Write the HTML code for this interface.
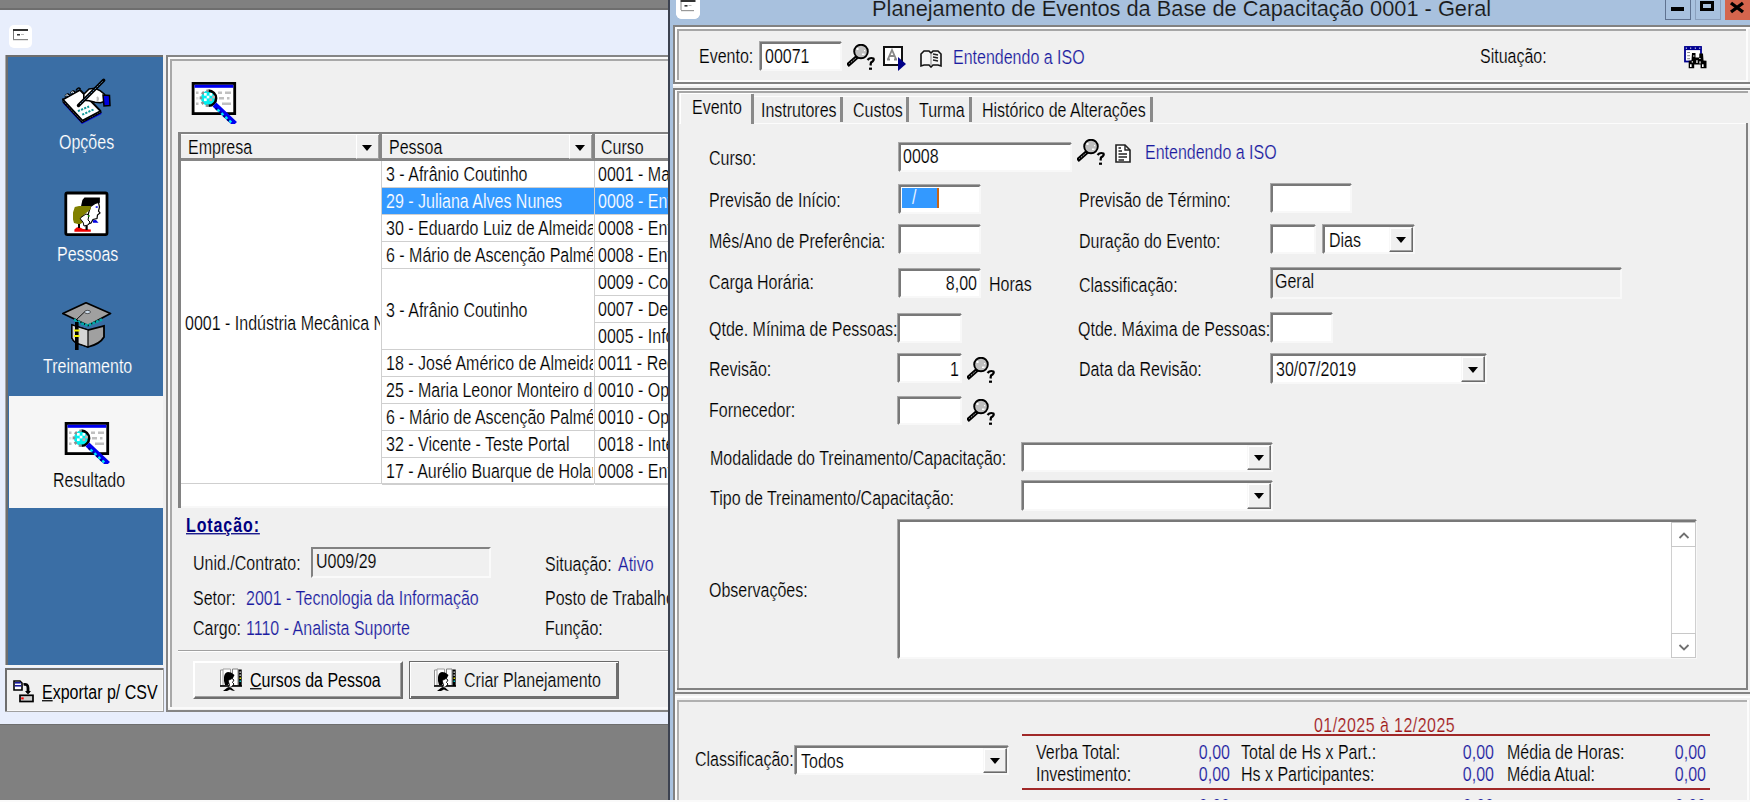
<!DOCTYPE html>
<html><head><meta charset="utf-8">
<style>
*{margin:0;padding:0;box-sizing:border-box}
html,body{width:1750px;height:802px;overflow:hidden;background:#808080;font-family:"Liberation Sans",sans-serif;font-size:16px;color:#000}
.a{position:absolute}
.t{position:absolute;white-space:nowrap;line-height:18px;font-size:16px;transform:scaleY(1.25);transform-origin:0 14.5px;-webkit-text-stroke:0.15px var(--bg,#f0f0f0)}
.wb{--bg:#fff}
.ttl{transform:none}
.w{color:#fff}
.bl{color:#1c1ca0}
.sunk{position:absolute;background:#fff;border-style:solid;border-width:2px;border-color:#787878 #f8f8f8 #f8f8f8 #787878;box-shadow:-1px -1px 0 #a8a8a8}
.btn{position:absolute;background:#f0f0f0;border:1px solid #f8f8f8;border-right-color:#6a6a6a;border-bottom-color:#6a6a6a;box-shadow:inset -1px -1px 0 #a0a0a0, inset 1px 1px 0 #fff}
.hl{position:absolute;background:#808080}
.vl{position:absolute;background:#808080}
</style></head><body>

<!-- LEFT WINDOW -->
<div class="a" style="left:0;top:0;width:669px;height:8px;background:#808080"></div>
<div class="a" style="left:0;top:8px;width:669px;height:2px;background:#6e6e6e"></div>
<div class="a" style="left:0;top:10px;width:669px;height:714px;background:#e8eefc"></div>
<div class="a" style="left:0;top:724px;width:669px;height:1px;background:#6e6e6e"></div>
<div class="a" id="winicon" style="left:9px;top:25px;width:23px;height:23px;background:#fff;border-radius:5px"><svg width="23" height="23" viewBox="0 0 23 23"><rect x="0.5" y="0.5" width="22" height="22" rx="5" fill="#fff"/><rect x="4" y="4" width="15" height="2" fill="#333"/><rect x="4" y="6" width="1" height="9" fill="#777"/><rect x="4" y="14" width="15" height="1.2" fill="#888"/><rect x="8" y="9" width="3" height="1.5" fill="#333"/><rect x="12" y="9" width="3" height="1" fill="#bbb"/></svg></div>

<!-- nav panel -->
<div class="a" style="left:5px;top:55px;width:159px;height:612px;background:#a8a8a8"></div>
<div class="a" style="left:6px;top:55px;width:157px;height:611px;background:#6e6e6e"></div>
<div class="a" style="left:8px;top:57px;width:155px;height:608px;background:#3a6ea5"></div>
<div class="a" style="left:9px;top:396px;width:154px;height:112px;background:#f6f6f6"></div>
<div class="a" style="left:163px;top:55px;width:3px;height:612px;background:#f0f0f0"></div>
<div class="a" style="left:5px;top:665px;width:158px;height:2px;background:#f4f4f4"></div>
<div class="t w" style="--bg:#3a6ea5;left:59px;top:135px">Opções</div>
<div class="t w" style="--bg:#3a6ea5;left:57px;top:247px">Pessoas</div>
<div class="t w" style="--bg:#3a6ea5;left:43px;top:359px">Treinamento</div>
<div class="t" style="--bg:#f6f6f6;left:53px;top:473px">Resultado</div>

<div class="a" id="icoOpc" style="left:61px;top:77px;width:50px;height:48px"><svg width="50" height="48" viewBox="0 0 50 48"><path d="M2.5 27 L21 47 L40.5 37 L40 34 L21 44 L2 23 Z" fill="#0000e0"/><path d="M2 22.5 L2 25 L21 45.5 L40 35.5 L39.5 34 L21.5 43.5 Z" fill="#fff" stroke="#000" stroke-width="1.2"/><path d="M2 22.5 L21.5 43.5 L39.5 34 L19 13 Z" fill="#fff" stroke="#000" stroke-width="1.8" stroke-linejoin="round"/><path d="M3 25.5 L21 45 L39.5 35.5" fill="none" stroke="#000" stroke-width="1.4" stroke-dasharray="1.4 1.4"/><path d="M16.9 34.1 L28.1 29.5 M21.2 37.7 L32.8 32.4" stroke="#109898" stroke-width="2" stroke-dasharray="2.2 1.2"/><path d="M4 19.5 Q6 15.5 8.5 18 M9.5 16.5 Q11.5 12.5 14 15 M15 13.5 Q17 9.5 19.5 12" fill="none" stroke="#000" stroke-width="1.5"/><path d="M4.5 18.5 Q6 17 7.5 18.5 M10 15.5 Q11.5 14 13 15.5" fill="none" stroke="#fff" stroke-width="1"/><path d="M22.8 17.2 L28.1 11.9 L34.1 11.2 L39.4 13.9 L43.4 17.2 L44.7 21.2 L43.4 24.5 L39.4 25.8 L34.1 25.2 L28.1 23.8 L22.8 23.2 Z" fill="#fff" stroke="#000" stroke-width="1.6"/><path d="M36 20 Q38 22 36 24" fill="none" stroke="#c0c0c0" stroke-width="2"/><path d="M42 18 L48.5 18.5 L49 28.5 L43 29 Z" fill="#0000e0" stroke="#000" stroke-width="1.5"/><path d="M17.5 28.5 L42.7 3.3" stroke="#000" stroke-width="3.4" stroke-linecap="round"/><path d="M19 27 L42 4" stroke="#6090c0" stroke-width="0.9" stroke-dasharray="2 1"/></svg></div>
<div class="a" id="icoPes" style="left:64px;top:191px;width:45px;height:45px"><svg width="45" height="45" viewBox="0 0 45 45"><rect x="1.8" y="2" width="41.2" height="41.6" rx="1.5" fill="#fff" stroke="#000" stroke-width="2.8"/><path d="M17 15.3 L18.4 9 L20.5 6.5 L35.9 6.5 L35.9 11.8 L33.1 12.5 L28.2 15.3 Z" fill="#000"/><path d="M26.5 15.5 L31 12.5 L34.5 11.5 L35.5 16 L34.5 20 L36 22 L33.5 24 L33 27.5 L29 28.5 L27 32 L24 33 L21 30 L24 24 Z" fill="#fff" stroke="#000" stroke-width="1.2"/><path d="M9 21.5 L10.8 16 L15 14.9 L26.8 14.9 L26.8 18 L17 26.4 L16.3 27.8 L19.1 31.3 L15.6 33.4 L10 32 L9 28.5 Z" fill="#808000"/><path d="M17 26.4 L22 23 L25 24 L24 29 L26 31 L24 34 L20 35 L19.1 31.3 L16.3 27.8 Z" fill="#fff" stroke="#000" stroke-width="1"/><rect x="23.8" y="24.3" width="1.6" height="1.5" fill="#00a000"/><rect x="31.7" y="15.3" width="2" height="1.5" fill="#0000e0"/><path d="M28.9 29.2 L32 29 L34.5 31.7 L29 31.7 Z" fill="#0000e0"/><path d="M10.4 38.5 L13 36.2 L16 36.5 L19 38 L26.8 38.5 L26.8 40.7 L10.4 40.7 Z" fill="#f00000"/><rect x="14" y="33" width="2" height="4" fill="#000"/><rect x="21.5" y="34.5" width="2.2" height="4.5" fill="#000"/></svg></div>
<div class="a" id="icoTre" style="left:62px;top:302px;width:50px;height:48px"><svg width="50" height="48" viewBox="0 0 50 48"><path d="M10 23 L10 36 Q12 41 19 42.5 L26 45 Q38 42 42 35 L42 24 L26 28 Z" fill="#a0a0a0" stroke="#000" stroke-width="1.8"/><path d="M10 23 L26 28 L26 45 L19 42.5 Q12 41 10 36 Z" fill="#d4d4d4" stroke="#000" stroke-width="1.2"/><path d="M0.8 11.5 L24 0.8 L48.5 11.5 L26 23.5 Z" fill="#a0a0a0" stroke="#000" stroke-width="1.8" stroke-linejoin="round"/><path d="M12 17.5 L16 19.5 L20 21.5 L26 23.5 L33 20.5 L40 17.5" fill="none" stroke="#00a8a8" stroke-width="2.6" stroke-dasharray="3 1"/><path d="M14 18 L23 9.5" fill="none" stroke="#000" stroke-width="0.9"/><ellipse cx="25.5" cy="10" rx="3" ry="1.6" fill="#d0e0f0" stroke="#333" stroke-width="0.8"/><rect x="13" y="20" width="3.6" height="28" fill="#000"/><rect x="12" y="27.5" width="5.6" height="2" fill="#f0f000"/><rect x="12" y="33" width="5.6" height="2" fill="#f0f000"/></svg></div>
<div class="a" id="icoResult2" style="left:64px;top:422px;width:46px;height:42px"><svg width="46" height="42" viewBox="0 0 46 42"><rect x="2.1" y="1.4" width="41.6" height="30.2" fill="#fff" stroke="#000" stroke-width="2.8"/><rect x="3.5" y="2.8" width="38.8" height="3" fill="#0000f0"/><rect x="27" y="9.5" width="4" height="2.5" fill="#c0c0c0"/><rect x="34" y="9.5" width="6" height="2.5" fill="#c0c0c0"/><rect x="28" y="15" width="5" height="2.5" fill="#c0c0c0"/><rect x="36" y="15" width="2.5" height="2.5" fill="#c0c0c0"/><rect x="31" y="20.5" width="9" height="2.5" fill="#c0c0c0"/><rect x="5" y="9.5" width="2.5" height="2.5" fill="#c0c0c0"/><rect x="5" y="20.5" width="2.5" height="2.5" fill="#c0c0c0"/><rect x="5" y="15" width="2.5" height="2.5" fill="#e0e0e0"/><circle cx="17.5" cy="16.2" r="7.6" fill="#00f0f0"/><path d="M17.5 8.6 A7.6 7.6 0 0 1 17.5 23.8" fill="none" stroke="#000" stroke-width="2.6"/><path d="M17.5 23.8 A7.6 7.6 0 0 1 17.5 8.6" fill="none" stroke="#909090" stroke-width="2.6" stroke-dasharray="2.7 2.7"/><rect x="13" y="11" width="2.7" height="2.7" fill="#fff"/><rect x="18.5" y="11" width="2.7" height="2.7" fill="#fff"/><rect x="15.7" y="13.7" width="2.7" height="2.7" fill="#fff"/><rect x="13" y="16.4" width="2.7" height="2.7" fill="#fff"/><rect x="21.2" y="13.7" width="2.7" height="2.7" fill="#c8b0b0"/><rect x="18.5" y="16.4" width="2.7" height="2.7" fill="#c8b0b0"/><path d="M25.5 24.5 L42 40" stroke="#0000f0" stroke-width="5.6" stroke-linecap="square"/><path d="M24.5 26 L40 41" stroke="#000080" stroke-width="1.8" stroke-dasharray="2.7 2.7"/><path d="M26.5 27.5 L41 41" stroke="#00f0f0" stroke-width="2.2" stroke-dasharray="2.7 2.7"/></svg></div>
<!-- export button -->
<div class="a" style="left:5px;top:668px;width:159px;height:44px;background:#f8f8f8;border-top:2px solid #6e6e6e;border-left:2px solid #6e6e6e"></div>
<div class="a" style="left:7px;top:670px;width:155px;height:40px;background:#f0f0f0"></div>
<div class="a" style="left:163px;top:668px;width:1px;height:44px;background:#a0a0a0"></div>
<div class="a" style="left:5px;top:711px;width:159px;height:1px;background:#a0a0a0"></div>
<div class="t" style="left:42px;top:685px;-webkit-text-stroke:0"><u>E</u>xportar p/ CSV</div>
<div class="a" id="icoExp" style="left:13px;top:680px;width:22px;height:24px"><svg width="22" height="24" viewBox="0 0 22 24"><path d="M1 1 L7 1 L9 3 L9 10 L1 10 Z" fill="#fff" stroke="#000" stroke-width="1.6"/><rect x="1.8" y="2" width="6" height="1.6" fill="#1818a0"/><rect x="1.8" y="5" width="6.5" height="1.6" fill="#1818a0"/><path d="M10.5 4.5 Q15 3.5 15 8 L15 13" fill="none" stroke="#000" stroke-width="2.8"/><path d="M12 11 L18 11 L15 14.5 Z" fill="#000"/><rect x="7" y="15.3" width="13" height="6.2" fill="#d0d0d0" stroke="#000" stroke-width="1.7"/><rect x="8.2" y="17.4" width="2.5" height="2" fill="#f00"/></svg></div>


<!-- middle panel -->
<div class="a" style="left:166px;top:55px;width:503px;height:657px;background:#f0f0f0;border:2px solid #858585;border-right:none"></div>
<div class="a" style="left:168px;top:57px;width:501px;height:2px;background:#fafafa"></div>
<div class="a" style="left:168px;top:57px;width:2px;height:651px;background:#fafafa"></div>
<div class="a" style="left:170px;top:59px;width:499px;height:2px;background:#a8a8a8"></div>
<div class="a" style="left:170px;top:59px;width:2px;height:649px;background:#a8a8a8"></div>
<div class="a" style="left:170px;top:707px;width:499px;height:2px;background:#fafafa"></div>
<!-- search icon -->
<div class="a" id="icoResult1" style="left:191px;top:82px;width:46px;height:41px"><svg width="46" height="42" viewBox="0 0 46 42"><rect x="2.1" y="1.4" width="41.6" height="30.2" fill="#fff" stroke="#000" stroke-width="2.8"/><rect x="3.5" y="2.8" width="38.8" height="3" fill="#0000f0"/><rect x="27" y="9.5" width="4" height="2.5" fill="#c0c0c0"/><rect x="34" y="9.5" width="6" height="2.5" fill="#c0c0c0"/><rect x="28" y="15" width="5" height="2.5" fill="#c0c0c0"/><rect x="36" y="15" width="2.5" height="2.5" fill="#c0c0c0"/><rect x="31" y="20.5" width="9" height="2.5" fill="#c0c0c0"/><rect x="5" y="9.5" width="2.5" height="2.5" fill="#c0c0c0"/><rect x="5" y="20.5" width="2.5" height="2.5" fill="#c0c0c0"/><rect x="5" y="15" width="2.5" height="2.5" fill="#e0e0e0"/><circle cx="17.5" cy="16.2" r="7.6" fill="#00f0f0"/><path d="M17.5 8.6 A7.6 7.6 0 0 1 17.5 23.8" fill="none" stroke="#000" stroke-width="2.6"/><path d="M17.5 23.8 A7.6 7.6 0 0 1 17.5 8.6" fill="none" stroke="#909090" stroke-width="2.6" stroke-dasharray="2.7 2.7"/><rect x="13" y="11" width="2.7" height="2.7" fill="#fff"/><rect x="18.5" y="11" width="2.7" height="2.7" fill="#fff"/><rect x="15.7" y="13.7" width="2.7" height="2.7" fill="#fff"/><rect x="13" y="16.4" width="2.7" height="2.7" fill="#fff"/><rect x="21.2" y="13.7" width="2.7" height="2.7" fill="#c8b0b0"/><rect x="18.5" y="16.4" width="2.7" height="2.7" fill="#c8b0b0"/><path d="M25.5 24.5 L42 40" stroke="#0000f0" stroke-width="5.6" stroke-linecap="square"/><path d="M24.5 26 L40 41" stroke="#000080" stroke-width="1.8" stroke-dasharray="2.7 2.7"/><path d="M26.5 27.5 L41 41" stroke="#00f0f0" stroke-width="2.2" stroke-dasharray="2.7 2.7"/></svg></div>
<!-- grid -->
<div class="a" style="left:178px;top:132px;width:491px;height:376px;background:#f8f8f8;border-left:3px solid #828282;border-top:2px solid #828282"></div>
<div class="a" style="left:181px;top:134px;width:488px;height:24px;background:#f0f0f0;border-top:1px solid #fff"></div>
<div class="a" style="left:181px;top:158px;width:488px;height:3px;background:#868686"></div>
<div class="a" style="left:379px;top:134px;width:3px;height:26px;background:#868686"></div>
<div class="a" style="left:592px;top:134px;width:3px;height:26px;background:#868686"></div>
<div class="a" style="left:356px;top:135px;width:23px;height:24px;background:#f0f0f0;border-left:1px solid #fff;border-right:1px solid #a0a0a0;border-bottom:1px solid #a0a0a0"></div>
<div class="a" style="left:362px;top:145px;width:0;height:0;border-left:5.5px solid transparent;border-right:5.5px solid transparent;border-top:6px solid #000"></div>
<div class="a" style="left:569px;top:135px;width:23px;height:24px;background:#f0f0f0;border-left:1px solid #fff;border-right:1px solid #a0a0a0;border-bottom:1px solid #a0a0a0"></div>
<div class="a" style="left:575px;top:145px;width:0;height:0;border-left:5.5px solid transparent;border-right:5.5px solid transparent;border-top:6px solid #000"></div>
<div class="t" style="left:188px;top:140px">Empresa</div>
<div class="t" style="left:389px;top:140px">Pessoa</div>
<div class="t" style="left:601px;top:140px">Curso</div>
<div class="a" style="left:181px;top:161px;width:488px;height:345px;background:#fff"></div>
<div class="a" style="left:381px;top:161px;width:1px;height:323px;background:#cfcfcf"></div>
<div class="a" style="left:594px;top:161px;width:1px;height:323px;background:#cfcfcf"></div>
<div class="a" style="left:181px;top:483px;width:488px;height:1px;background:#cfcfcf"></div>
<div class="t wb" style="left:185px;top:316px;width:195px;overflow:hidden">0001 - Indústria Mecânica Nacional</div>
<div class="a" style="left:382px;top:187px;width:212px;height:1px;background:#cfcfcf"></div>
<div class="t wb" style="left:386px;top:167px;width:207px;overflow:hidden">3 - Afrânio Coutinho</div>
<div class="a" style="left:382px;top:188px;width:212px;height:26px;background:#3399ff"></div>
<div class="a" style="left:382px;top:214px;width:212px;height:1px;background:#cfcfcf"></div>
<div class="t w" style="--bg:#3399ff;left:386px;top:194px;width:207px;overflow:hidden">29 - Juliana Alves Nunes</div>
<div class="a" style="left:382px;top:241px;width:212px;height:1px;background:#cfcfcf"></div>
<div class="t wb" style="left:386px;top:221px;width:207px;overflow:hidden">30 - Eduardo Luiz de Almeida</div>
<div class="a" style="left:382px;top:268px;width:212px;height:1px;background:#cfcfcf"></div>
<div class="t wb" style="left:386px;top:248px;width:207px;overflow:hidden">6 - Mário de Ascenção Palmé</div>
<div class="a" style="left:382px;top:349px;width:212px;height:1px;background:#cfcfcf"></div>
<div class="t wb" style="left:386px;top:303px;width:207px;overflow:hidden">3 - Afrânio Coutinho</div>
<div class="a" style="left:382px;top:376px;width:212px;height:1px;background:#cfcfcf"></div>
<div class="t wb" style="left:386px;top:356px;width:207px;overflow:hidden">18 - José Américo de Almeida</div>
<div class="a" style="left:382px;top:403px;width:212px;height:1px;background:#cfcfcf"></div>
<div class="t wb" style="left:386px;top:383px;width:207px;overflow:hidden">25 - Maria Leonor Monteiro de</div>
<div class="a" style="left:382px;top:430px;width:212px;height:1px;background:#cfcfcf"></div>
<div class="t wb" style="left:386px;top:410px;width:207px;overflow:hidden">6 - Mário de Ascenção Palmé</div>
<div class="a" style="left:382px;top:457px;width:212px;height:1px;background:#cfcfcf"></div>
<div class="t wb" style="left:386px;top:437px;width:207px;overflow:hidden">32 - Vicente - Teste Portal</div>
<div class="a" style="left:382px;top:484px;width:212px;height:1px;background:#cfcfcf"></div>
<div class="t wb" style="left:386px;top:464px;width:207px;overflow:hidden">17 - Aurélio Buarque de Holar</div>
<div class="a" style="left:595px;top:187px;width:74px;height:1px;background:#cfcfcf"></div>
<div class="t wb" style="left:598px;top:167px;width:71px;overflow:hidden">0001 - Manutenção</div>
<div class="a" style="left:595px;top:188px;width:74px;height:26px;background:#3399ff"></div>
<div class="a" style="left:595px;top:214px;width:74px;height:1px;background:#cfcfcf"></div>
<div class="t w" style="--bg:#3399ff;left:598px;top:194px;width:71px;overflow:hidden">0008 - Entendendo</div>
<div class="a" style="left:595px;top:241px;width:74px;height:1px;background:#cfcfcf"></div>
<div class="t wb" style="left:598px;top:221px;width:71px;overflow:hidden">0008 - Entendendo</div>
<div class="a" style="left:595px;top:268px;width:74px;height:1px;background:#cfcfcf"></div>
<div class="t wb" style="left:598px;top:248px;width:71px;overflow:hidden">0008 - Entendendo</div>
<div class="a" style="left:595px;top:295px;width:74px;height:1px;background:#cfcfcf"></div>
<div class="t wb" style="left:598px;top:275px;width:71px;overflow:hidden">0009 - Controle</div>
<div class="a" style="left:595px;top:322px;width:74px;height:1px;background:#cfcfcf"></div>
<div class="t wb" style="left:598px;top:302px;width:71px;overflow:hidden">0007 - Desenho</div>
<div class="a" style="left:595px;top:349px;width:74px;height:1px;background:#cfcfcf"></div>
<div class="t wb" style="left:598px;top:329px;width:71px;overflow:hidden">0005 - Informática</div>
<div class="a" style="left:595px;top:376px;width:74px;height:1px;background:#cfcfcf"></div>
<div class="t wb" style="left:598px;top:356px;width:71px;overflow:hidden">0011 - Redação</div>
<div class="a" style="left:595px;top:403px;width:74px;height:1px;background:#cfcfcf"></div>
<div class="t wb" style="left:598px;top:383px;width:71px;overflow:hidden">0010 - Operação</div>
<div class="a" style="left:595px;top:430px;width:74px;height:1px;background:#cfcfcf"></div>
<div class="t wb" style="left:598px;top:410px;width:71px;overflow:hidden">0010 - Operação</div>
<div class="a" style="left:595px;top:457px;width:74px;height:1px;background:#cfcfcf"></div>
<div class="t wb" style="left:598px;top:437px;width:71px;overflow:hidden">0018 - Integração</div>
<div class="a" style="left:595px;top:484px;width:74px;height:1px;background:#cfcfcf"></div>
<div class="t wb" style="left:598px;top:464px;width:71px;overflow:hidden">0008 - Entendendo</div>
<!-- lotacao -->
<div class="t" style="left:186px;top:518px;font-weight:bold;color:#000080;text-decoration:underline;letter-spacing:0.9px;-webkit-text-stroke:0">Lotação:</div>
<div class="t" style="left:193px;top:556px">Unid./Contrato:</div>
<div class="a" style="left:311px;top:547px;width:180px;height:31px;background:#f0f0f0;border-style:solid;border-width:2px;border-color:#828282 #fafafa #fafafa #828282"></div>
<div class="t" style="left:316px;top:554px">U009/29</div>
<div class="t" style="left:545px;top:557px">Situação:</div>
<div class="t bl" style="left:618px;top:557px">Ativo</div>
<div class="t" style="left:193px;top:591px">Setor:</div>
<div class="t bl" style="left:246px;top:591px">2001 - Tecnologia da Informação</div>
<div class="t" style="left:545px;top:591px">Posto de Trabalho</div>
<div class="t" style="left:193px;top:621px">Cargo:</div>
<div class="t bl" style="left:246px;top:621px">1110 - Analista Suporte</div>
<div class="t" style="left:545px;top:621px">Função:</div>
<div class="a" style="left:178px;top:650px;width:491px;height:1px;background:#a0a0a0"></div>
<div class="a" style="left:178px;top:651px;width:491px;height:1px;background:#fff"></div>
<div class="a" style="left:193px;top:661px;width:210px;height:38px;background:#f0f0f0;border-style:solid;border-width:2px;border-color:#fff #6e6e6e #6e6e6e #fff;box-shadow:inset -1px -1px 0 #a0a0a0"></div>
<div class="a" id="icoBtn1" style="left:219px;top:668px;width:24px;height:24px"><svg width="24" height="24" viewBox="0 0 24 24"><path d="M1.5 2 L5 2 L5 17.5 L1.5 17.5 Z" fill="#fff" stroke="#909090" stroke-width="1"/><path d="M4 1 L11.5 1 L11.5 17.5 L4 17.5 Z" fill="#fff" stroke="#a0a0a0" stroke-width="1"/><path d="M13.5 1 L19 1 L19 17.5 L13.5 17.5 Z" fill="#fff" stroke="#808080" stroke-width="1"/><rect x="19.5" y="1.5" width="3.2" height="16.5" fill="#000"/><rect x="20.5" y="3.5" width="1.3" height="1.3" fill="#fff"/><rect x="20.5" y="6.5" width="1.3" height="1.3" fill="#fff"/><rect x="20.5" y="9.5" width="1.5" height="1.5" fill="#e0e000"/><rect x="20.5" y="12.5" width="1.5" height="1.5" fill="#00c0c0"/><rect x="1" y="17.2" width="22" height="1.6" fill="#000"/><path d="M5 9 Q5.5 4.5 9 4 L12 4.5 L15.5 7 L14 10 L12.5 11.5 L11 14 L9 17 L6 17 L5 13 Z" fill="#000"/><path d="M9 12.5 L13 10.5 L15 12 L13.5 14.5 L15 16 L12.5 19 L9.5 19.5 L10.5 17 Z" fill="#fff" stroke="#000" stroke-width="0.9"/><path d="M4 23 L8.5 19.5 L12.5 20 L16 23 L13 22.5 L11 21.5 L8 23 Z" fill="#000"/></svg></div>
<div class="t" style="left:250px;top:673px;-webkit-text-stroke:0"><u>C</u>ursos da Pessoa</div>
<div class="a" style="left:409px;top:661px;width:210px;height:38px;background:#f0f0f0;border:1px solid #6a6a6a;box-shadow:inset 1px 1px 0 #fff, inset -2px -2px 0 #6e6e6e"></div>
<div class="a" id="icoBtn2" style="left:433px;top:668px;width:24px;height:24px"><svg width="24" height="24" viewBox="0 0 24 24"><path d="M1.5 2 L5 2 L5 17.5 L1.5 17.5 Z" fill="#fff" stroke="#909090" stroke-width="1"/><path d="M4 1 L11.5 1 L11.5 17.5 L4 17.5 Z" fill="#fff" stroke="#a0a0a0" stroke-width="1"/><path d="M13.5 1 L19 1 L19 17.5 L13.5 17.5 Z" fill="#fff" stroke="#808080" stroke-width="1"/><rect x="19.5" y="1.5" width="3.2" height="16.5" fill="#000"/><rect x="20.5" y="3.5" width="1.3" height="1.3" fill="#fff"/><rect x="20.5" y="6.5" width="1.3" height="1.3" fill="#fff"/><rect x="20.5" y="9.5" width="1.5" height="1.5" fill="#e0e000"/><rect x="20.5" y="12.5" width="1.5" height="1.5" fill="#00c0c0"/><rect x="1" y="17.2" width="22" height="1.6" fill="#000"/><path d="M5 9 Q5.5 4.5 9 4 L12 4.5 L15.5 7 L14 10 L12.5 11.5 L11 14 L9 17 L6 17 L5 13 Z" fill="#000"/><path d="M9 12.5 L13 10.5 L15 12 L13.5 14.5 L15 16 L12.5 19 L9.5 19.5 L10.5 17 Z" fill="#fff" stroke="#000" stroke-width="0.9"/><path d="M4 23 L8.5 19.5 L12.5 20 L16 23 L13 22.5 L11 21.5 L8 23 Z" fill="#000"/></svg></div>
<div class="t" style="left:464px;top:673px">Criar Planejamento</div>

<!-- DIALOG -->
<div class="a" style="left:668px;top:0;width:2px;height:802px;background:#3c4250"></div>
<div class="a" style="left:670px;top:0;width:1080px;height:802px;background:#a8c1de"></div>
<div class="a" id="dlgicon" style="left:676px;top:-5px;width:24px;height:24px;background:#fff;border-radius:6px"><svg width="24" height="24" viewBox="0 0 24 24"><rect x="0" y="0" width="24" height="24" rx="6" fill="#fff"/><rect x="4.5" y="5" width="15" height="2" fill="#333"/><rect x="4.5" y="7" width="1" height="8" fill="#888"/><rect x="5" y="15" width="13" height="1.2" fill="#999"/><rect x="8.5" y="10" width="3" height="1.6" fill="#333"/><rect x="12.5" y="10" width="3" height="1" fill="#bbb"/></svg></div>
<div class="t ttl" style="--bg:#a8c1de;left:872px;top:-3px;font-size:21.8px;line-height:24px;color:#1a1a1a">Planejamento de Eventos da Base de Capacitação 0001 - Geral</div>
<div class="a" style="left:1665px;top:-1px;width:26px;height:21px;border:1px solid #5f7290;border-top:none"></div>
<div class="a" style="left:1671px;top:7px;width:13px;height:4px;background:#000"></div>
<div class="a" style="left:1695px;top:-1px;width:26px;height:21px;border:1px solid #8a9fbc;border-top:none"></div>
<div class="a" style="left:1700px;top:1px;width:14px;height:10px;border:3px solid #000"></div>
<div class="a" style="left:1725px;top:0;width:25px;height:20px;background:#d4654d"></div>
<div class="a" style="left:1729px;top:0;width:16px;height:13px"><svg width="16" height="13" viewBox="0 0 16 13"><path d="M2 2 L14 11 M14 2 L2 11" stroke="#000" stroke-width="3.4" stroke-linecap="butt"/></svg></div>
<div class="a" style="left:673px;top:25px;width:1077px;height:777px;background:#f0f0f0"></div>
<div class="a" style="left:673px;top:25px;width:1077px;height:2px;background:#828282"></div>
<div class="a" style="left:673px;top:25px;width:2px;height:59px;background:#828282"></div>
<div class="a" style="left:675px;top:27px;width:1075px;height:2px;background:#fcfcfc"></div>
<div class="a" style="left:675px;top:27px;width:2px;height:55px;background:#fcfcfc"></div>
<div class="a" style="left:677px;top:29px;width:1071px;height:2px;background:#a6a6a6"></div>
<div class="a" style="left:677px;top:29px;width:2px;height:51px;background:#a6a6a6"></div>
<div class="a" style="left:677px;top:80px;width:1071px;height:2px;background:#fcfcfc"></div>
<div class="a" style="left:1746px;top:29px;width:2px;height:53px;background:#fcfcfc"></div>
<div class="a" style="left:673px;top:82px;width:1077px;height:2px;background:#828282"></div>
<div class="a" style="left:673px;top:84px;width:1077px;height:2px;background:#fcfcfc"></div>
<div class="t " style="left:699px;top:49px;">Evento:</div>
<div class="sunk" style="left:760px;top:42px;width:82px;height:29px;background:#fff"></div>
<div class="t wb" style="left:765px;top:49px;">00071</div>
<div class="a" id="icoMag0" style="left:847px;top:44px;width:29px;height:28px"><svg width="30" height="28" viewBox="0 0 30 28"><path d="M9.5 13.5 L2 20" stroke="#000" stroke-width="4.2" stroke-linecap="square"/><path d="M8.5 14.5 L2.5 19.5" stroke="#fff" stroke-width="0.9" stroke-dasharray="1.2 1.2"/><circle cx="14" cy="7.5" r="6.8" fill="#c0c0c0" stroke="#000" stroke-width="1.9"/><rect x="9.5" y="4" width="2" height="2" fill="#fff"/><rect x="15" y="9.5" width="2.5" height="1.5" fill="#fff"/><rect x="17" y="6" width="1.2" height="1.2" fill="#fff"/><path d="M20.5 16 Q23 13 26.5 14.5 Q27.5 16.5 24 18.5 L23.5 21.5" fill="none" stroke="#000" stroke-width="2.2"/><rect x="22" y="23.6" width="3" height="2.2" fill="#000"/></svg></div>
<div class="a" id="icoDocA" style="left:883px;top:46px;width:23px;height:24px"><svg width="24" height="26" viewBox="0 0 24 26"><rect x="1" y="1" width="18" height="18" fill="#fff" stroke="#111" stroke-width="2"/><path d="M5 13 L9 4 L13 13 M6.5 10 L11.5 10 M4 13.5 L7 13.5 M11 13.5 L14 13.5" fill="none" stroke="#888" stroke-width="1.8"/><path d="M15 11 L23 18 L15 25 Z" fill="#000088"/></svg></div>
<div class="a" id="icoBook" style="left:920px;top:50px;width:22px;height:17px"><svg width="22" height="18" viewBox="0 0 22 18"><path d="M1 16 L1 4 L4 1 L9 1 L11 3 L13 1 L18 1 L21 4 L21 16 L18 15 L13 15 L11 17 L9 15 L4 15 Z" fill="#f4f4f4" stroke="#111" stroke-width="1.6"/><path d="M11 3 L11 16" stroke="#888" stroke-width="1"/><path d="M13 4 L18 5 M13 7 L18 8 M13 10 L18 11" stroke="#222" stroke-width="1.4"/></svg></div>
<div class="t bl" style="left:953px;top:50px;">Entendendo a ISO</div>
<div class="t " style="left:1480px;top:49px;">Situação:</div>
<div class="a" id="icoBino" style="left:1683px;top:46px;width:24px;height:23px"><svg width="26" height="24" viewBox="0 0 26 24"><rect x="2" y="1" width="16" height="14.5" fill="#fff" stroke="#000090" stroke-width="1.8"/><rect x="1.5" y="0.5" width="17" height="3.6" fill="#000090"/><rect x="2.8" y="1.6" width="1.1" height="1.1" fill="#fff"/><rect x="7.1" y="1.6" width="1.1" height="1.1" fill="#fff"/><rect x="11.8" y="1.6" width="1.1" height="1.1" fill="#fff"/><rect x="16.2" y="1.6" width="1.1" height="1.1" fill="#fff"/><rect x="4.2" y="6" width="2.8" height="1" fill="#888"/><rect x="4.2" y="9.2" width="2.8" height="1" fill="#888"/><rect x="4.2" y="12.2" width="2.8" height="1" fill="#888"/><path d="M9 7 L12.5 7 L12.5 11.5 L16.3 11.5 L16.3 7.6 L20 7.6 L20.5 14.5 L23.5 14.8 L23.5 22.2 L17.6 22.2 L17.6 18.6 L11.2 18.6 L11.2 22.2 L5.7 22.2 L5.7 14.8 L8.5 14.5 Z" fill="#000"/><rect x="10" y="9.5" width="1.5" height="1" fill="#fff"/><rect x="8.7" y="15.3" width="1.3" height="1.2" fill="#fff"/><rect x="7" y="18.3" width="1.6" height="2.7" fill="#fff"/><rect x="13.3" y="14.2" width="1.3" height="2.8" fill="#fff"/><rect x="16.2" y="12" width="1.4" height="0.9" fill="#fff"/><rect x="16.4" y="15.3" width="1.2" height="2.2" fill="#fff"/><rect x="19" y="18.3" width="1.6" height="2.7" fill="#fff"/></svg></div>
<div class="a" style="left:673px;top:88px;width:1077px;height:2px;background:#828282"></div>
<div class="a" style="left:673px;top:88px;width:2px;height:606px;background:#828282"></div>
<div class="a" style="left:675px;top:90px;width:1075px;height:1px;background:#fcfcfc"></div>
<div class="a" style="left:675px;top:90px;width:2px;height:602px;background:#fcfcfc"></div>
<div class="a" style="left:677px;top:91px;width:1071px;height:2px;background:#a6a6a6"></div>
<div class="a" style="left:677px;top:91px;width:2px;height:598px;background:#a6a6a6"></div>
<div class="a" style="left:677px;top:688px;width:1071px;height:2px;background:#828282"></div>
<div class="a" style="left:1746px;top:123px;width:2px;height:567px;background:#828282"></div>
<div class="a" style="left:673px;top:692px;width:1077px;height:2px;background:#828282"></div>
<div class="a" style="left:679px;top:123px;width:1067px;height:1px;background:#fcfcfc"></div>
<div class="a" style="left:680px;top:93px;width:73px;height:31px;background:#f0f0f0;border-left:1px solid #fff;border-top:1px solid #fff"></div>
<div class="a" style="left:751px;top:94px;width:3px;height:30px;background:#8a8a8a"></div>
<div class="a" style="left:840px;top:97px;width:3px;height:25px;background:#8a8a8a"></div>
<div class="a" style="left:906px;top:97px;width:3px;height:25px;background:#8a8a8a"></div>
<div class="a" style="left:969px;top:97px;width:3px;height:25px;background:#8a8a8a"></div>
<div class="a" style="left:1150px;top:97px;width:3px;height:25px;background:#8a8a8a"></div>
<div class="a" style="left:754px;top:96px;width:396px;height:1px;background:#fcfcfc"></div>
<div class="t " style="left:692px;top:100px;">Evento</div>
<div class="t " style="left:761px;top:103px;">Instrutores</div>
<div class="t " style="left:853px;top:103px;">Custos</div>
<div class="t " style="left:919px;top:103px;">Turma</div>
<div class="t " style="left:982px;top:103px;">Histórico de Alterações</div>
<div class="t " style="left:709px;top:151px;">Curso:</div>
<div class="sunk" style="left:899px;top:143px;width:173px;height:29px;background:#fff"></div>
<div class="t wb" style="left:903px;top:149px;">0008</div>
<div class="a" id="icoMag1" style="left:1077px;top:139px;width:28px;height:28px"><svg width="30" height="28" viewBox="0 0 30 28"><path d="M9.5 13.5 L2 20" stroke="#000" stroke-width="4.2" stroke-linecap="square"/><path d="M8.5 14.5 L2.5 19.5" stroke="#fff" stroke-width="0.9" stroke-dasharray="1.2 1.2"/><circle cx="14" cy="7.5" r="6.8" fill="#c0c0c0" stroke="#000" stroke-width="1.9"/><rect x="9.5" y="4" width="2" height="2" fill="#fff"/><rect x="15" y="9.5" width="2.5" height="1.5" fill="#fff"/><rect x="17" y="6" width="1.2" height="1.2" fill="#fff"/><path d="M20.5 16 Q23 13 26.5 14.5 Q27.5 16.5 24 18.5 L23.5 21.5" fill="none" stroke="#000" stroke-width="2.2"/><rect x="22" y="23.6" width="3" height="2.2" fill="#000"/></svg></div>
<div class="a" id="icoDoc" style="left:1115px;top:144px;width:16px;height:19px"><svg width="16" height="19" viewBox="0 0 16 19"><path d="M1 1 L10 1 L15 6 L15 18 L1 18 Z" fill="#fff" stroke="#222" stroke-width="1.6"/><path d="M10 1 L10 6 L15 6" fill="none" stroke="#222" stroke-width="1.4"/><path d="M3.5 4 L6 4 M3.5 7 L7 7 M3.5 10 L12 10 M3.5 13 L12 13 M3.5 16 L9 16" stroke="#222" stroke-width="1.5"/></svg></div>
<div class="t bl" style="left:1145px;top:145px;">Entendendo a ISO</div>
<div class="t " style="left:709px;top:193px;">Previsão de Início:</div>
<div class="sunk" style="left:899px;top:185px;width:82px;height:29px;background:#fff"></div>
<div class="a" style="left:902px;top:188px;width:35px;height:20px;background:#3399ff"></div>
<div class="a" style="left:937px;top:188px;width:2px;height:20px;background:#c86414"></div>
<div class="t w" style="--bg:#3399ff;left:912px;top:190px;">/</div>
<div class="t " style="left:709px;top:234px;">Mês/Ano de Preferência:</div>
<div class="sunk" style="left:899px;top:225px;width:82px;height:29px;background:#fff"></div>
<div class="t " style="left:709px;top:275px;">Carga Horária:</div>
<div class="sunk" style="left:899px;top:269px;width:82px;height:29px;background:#fff"></div>
<div class="t wb" style="left:899px;top:276px;width:78px;text-align:right">8,00</div>
<div class="t " style="left:989px;top:277px;">Horas</div>
<div class="t " style="left:709px;top:322px;">Qtde. Mínima de Pessoas:</div>
<div class="sunk" style="left:898px;top:314px;width:64px;height:29px;background:#fff"></div>
<div class="t " style="left:709px;top:362px;">Revisão:</div>
<div class="sunk" style="left:898px;top:354px;width:64px;height:29px;background:#fff"></div>
<div class="t wb" style="left:898px;top:362px;width:61px;text-align:right">1</div>
<div class="a" id="icoMag2" style="left:967px;top:357px;width:30px;height:28px"><svg width="30" height="28" viewBox="0 0 30 28"><path d="M9.5 13.5 L2 20" stroke="#000" stroke-width="4.2" stroke-linecap="square"/><path d="M8.5 14.5 L2.5 19.5" stroke="#fff" stroke-width="0.9" stroke-dasharray="1.2 1.2"/><circle cx="14" cy="7.5" r="6.8" fill="#c0c0c0" stroke="#000" stroke-width="1.9"/><rect x="9.5" y="4" width="2" height="2" fill="#fff"/><rect x="15" y="9.5" width="2.5" height="1.5" fill="#fff"/><rect x="17" y="6" width="1.2" height="1.2" fill="#fff"/><path d="M20.5 16 Q23 13 26.5 14.5 Q27.5 16.5 24 18.5 L23.5 21.5" fill="none" stroke="#000" stroke-width="2.2"/><rect x="22" y="23.6" width="3" height="2.2" fill="#000"/></svg></div>
<div class="t " style="left:709px;top:403px;">Fornecedor:</div>
<div class="sunk" style="left:898px;top:397px;width:64px;height:28px;background:#fff"></div>
<div class="a" id="icoMag3" style="left:967px;top:399px;width:30px;height:26px"><svg width="30" height="28" viewBox="0 0 30 28"><path d="M9.5 13.5 L2 20" stroke="#000" stroke-width="4.2" stroke-linecap="square"/><path d="M8.5 14.5 L2.5 19.5" stroke="#fff" stroke-width="0.9" stroke-dasharray="1.2 1.2"/><circle cx="14" cy="7.5" r="6.8" fill="#c0c0c0" stroke="#000" stroke-width="1.9"/><rect x="9.5" y="4" width="2" height="2" fill="#fff"/><rect x="15" y="9.5" width="2.5" height="1.5" fill="#fff"/><rect x="17" y="6" width="1.2" height="1.2" fill="#fff"/><path d="M20.5 16 Q23 13 26.5 14.5 Q27.5 16.5 24 18.5 L23.5 21.5" fill="none" stroke="#000" stroke-width="2.2"/><rect x="22" y="23.6" width="3" height="2.2" fill="#000"/></svg></div>
<div class="t " style="left:710px;top:451px;">Modalidade do Treinamento/Capacitação:</div>
<div class="sunk" style="left:1022px;top:443px;width:251px;height:29px;background:#fff"></div><div class="btn" style="left:1247px;top:445px;width:24px;height:25px"></div><div class="a" style="left:1254px;top:455px;width:0;height:0;border-left:5px solid transparent;border-right:5px solid transparent;border-top:6px solid #000"></div>
<div class="t " style="left:710px;top:491px;">Tipo de Treinamento/Capacitação:</div>
<div class="sunk" style="left:1022px;top:481px;width:251px;height:30px;background:#fff"></div><div class="btn" style="left:1247px;top:483px;width:24px;height:26px"></div><div class="a" style="left:1254px;top:493px;width:0;height:0;border-left:5px solid transparent;border-right:5px solid transparent;border-top:6px solid #000"></div>
<div class="t " style="left:709px;top:583px;">Observações:</div>
<div class="sunk" style="left:898px;top:520px;width:799px;height:139px;background:#fff"></div>
<div class="a" style="left:1671px;top:522px;width:25px;height:135px;background:#fff;border:1px solid #d0d0d0"></div>
<div class="a" style="left:1671px;top:522px;width:25px;height:25px;background:#fff;border:1px solid #c8c8c8"></div>
<div class="a" style="left:1671px;top:633px;width:25px;height:25px;background:#fff;border:1px solid #c8c8c8"></div>
<div class="a" style="left:1676px;top:528px;width:16px;height:12px"><svg width="16" height="12" viewBox="0 0 16 12"><path d="M3.5 8 L8 3.5 L12.5 8" fill="none" stroke="#707070" stroke-width="1.8"/></svg></div>
<div class="a" style="left:1676px;top:639px;width:16px;height:12px"><svg width="16" height="12" viewBox="0 0 16 12"><path d="M3.5 4 L8 8.5 L12.5 4" fill="none" stroke="#707070" stroke-width="1.8"/></svg></div>
<div class="t " style="left:1079px;top:193px;">Previsão de Término:</div>
<div class="sunk" style="left:1271px;top:184px;width:81px;height:29px;background:#fff"></div>
<div class="t " style="left:1079px;top:234px;">Duração do Evento:</div>
<div class="sunk" style="left:1271px;top:225px;width:45px;height:29px;background:#fff"></div>
<div class="sunk" style="left:1323px;top:225px;width:92px;height:29px;background:#fff"></div><div class="btn" style="left:1389px;top:227px;width:24px;height:25px"></div><div class="a" style="left:1396px;top:237px;width:0;height:0;border-left:5px solid transparent;border-right:5px solid transparent;border-top:6px solid #000"></div><div class="t wb" style="left:1329px;top:233px;">Dias</div>
<div class="t " style="left:1079px;top:278px;">Classificação:</div>
<div class="sunk" style="left:1271px;top:268px;width:351px;height:31px;background:#f0f0f0"></div>
<div class="t " style="left:1275px;top:274px;">Geral</div>
<div class="t " style="left:1078px;top:322px;">Qtde. Máxima de Pessoas:</div>
<div class="sunk" style="left:1271px;top:313px;width:62px;height:30px;background:#fff"></div>
<div class="t " style="left:1079px;top:362px;">Data da Revisão:</div>
<div class="sunk" style="left:1271px;top:354px;width:216px;height:30px;background:#fff"></div><div class="btn" style="left:1461px;top:356px;width:24px;height:26px"></div><div class="a" style="left:1468px;top:367px;width:0;height:0;border-left:5px solid transparent;border-right:5px solid transparent;border-top:6px solid #000"></div><div class="t wb" style="left:1276px;top:362px;">30/07/2019</div>
<div class="a" style="left:673px;top:694px;width:2px;height:108px;background:#828282"></div>
<div class="a" style="left:675px;top:696px;width:1075px;height:2px;background:#fcfcfc"></div>
<div class="a" style="left:675px;top:696px;width:2px;height:106px;background:#fcfcfc"></div>
<div class="a" style="left:677px;top:700px;width:1071px;height:2px;background:#b0b0b0"></div>
<div class="a" style="left:677px;top:700px;width:2px;height:102px;background:#b0b0b0"></div>
<div class="a" style="left:1747px;top:700px;width:2px;height:102px;background:#fcfcfc"></div>
<div class="t " style="left:695px;top:752px;">Classificação:</div>
<div class="sunk" style="left:795px;top:746px;width:214px;height:29px;background:#fff"></div><div class="btn" style="left:983px;top:748px;width:24px;height:25px"></div><div class="a" style="left:990px;top:758px;width:0;height:0;border-left:5px solid transparent;border-right:5px solid transparent;border-top:6px solid #000"></div><div class="t wb" style="left:801px;top:754px;">Todos</div>
<div class="t " style="left:1314px;top:718px;color:#a01818;letter-spacing:0.45px">01/2025 à 12/2025</div>
<div class="a" style="left:1022px;top:734px;width:688px;height:2px;background:#a02828"></div>
<div class="a" style="left:1022px;top:788px;width:688px;height:2px;background:#a02828"></div>
<div class="t " style="left:1036px;top:745px;">Verba Total:</div>
<div class="t " style="left:1036px;top:767px;">Investimento:</div>
<div class="t " style="left:1241px;top:745px;">Total de Hs x Part.:</div>
<div class="t " style="left:1241px;top:767px;">Hs x Participantes:</div>
<div class="t " style="left:1507px;top:745px;">Média de Horas:</div>
<div class="t " style="left:1507px;top:767px;">Média Atual:</div>
<div class="t bl" style="left:1170px;top:745px;width:60px;text-align:right">0,00</div>
<div class="t bl" style="left:1170px;top:767px;width:60px;text-align:right">0,00</div>
<div class="t bl" style="left:1170px;top:799px;width:60px;text-align:right">0,00</div>
<div class="t bl" style="left:1434px;top:745px;width:60px;text-align:right">0,00</div>
<div class="t bl" style="left:1434px;top:767px;width:60px;text-align:right">0,00</div>
<div class="t bl" style="left:1434px;top:799px;width:60px;text-align:right">0,00</div>
<div class="t bl" style="left:1646px;top:745px;width:60px;text-align:right">0,00</div>
<div class="t bl" style="left:1646px;top:767px;width:60px;text-align:right">0,00</div>
<div class="t bl" style="left:1646px;top:799px;width:60px;text-align:right">0,00</div>
<div class="a" style="left:0;top:800px;width:1750px;height:2px;background:#fafafa"></div>
</body></html>
